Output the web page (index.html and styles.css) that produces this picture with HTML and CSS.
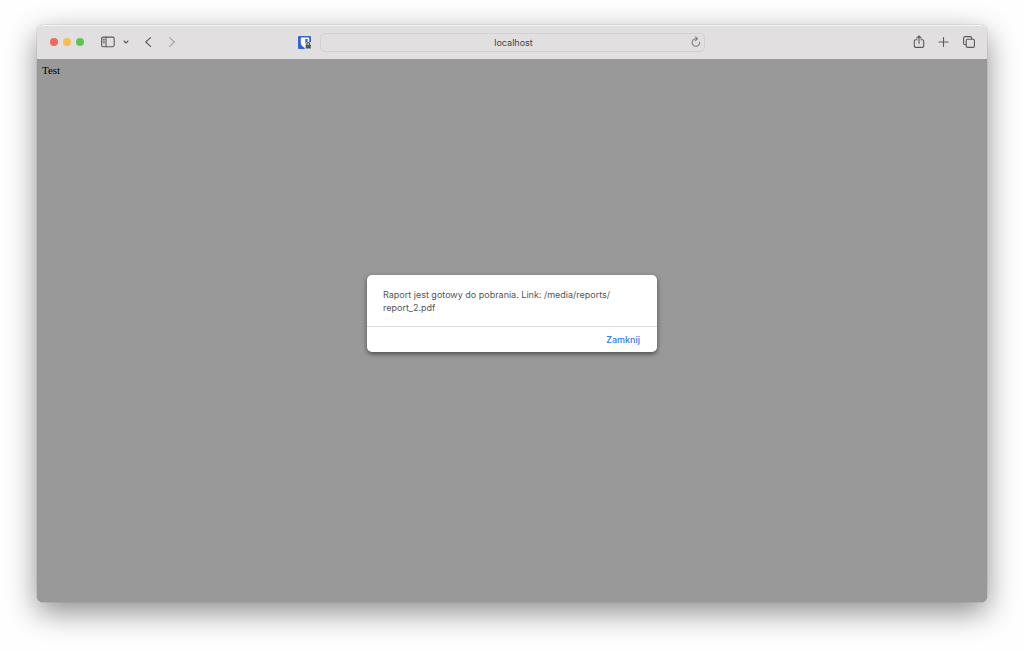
FILE: index.html
```html
<!DOCTYPE html>
<html lang="pl">
<head>
  <meta charset="UTF-8" />
  <title>localhost</title>
  <link rel="stylesheet" href="styles.css">
</head>
<body>

  <div class="window">
    <header class="toolbar">
      <div class="toolbar-left">
        <div class="lights">
          <span class="light red"></span>
          <span class="light yellow"></span>
          <span class="light green"></span>
        </div>
        <button class="icon-btn sidebar-btn" aria-label="Sidebar">
          <svg width="14" height="12" viewBox="0 0 14 12">
            <rect x="0.6" y="1.1" width="12.6" height="9.6" rx="1.6" />
            <path d="M5 1v9.600M2.200 3.300h1.200M2.200 5h1.200M2.200 6.700h1.200" />
          </svg>
        </button>
        <button class="icon-btn tabs-btn" aria-label="Tab groups">
          <svg width="6" height="6" viewBox="0 0 6 6"><path d="M1 2l2 2 2-2" /></svg>
        </button>
        <button class="icon-btn back-btn" aria-label="Back">
          <svg width="8" height="10" viewBox="0 0 8 10"><path d="M5.600.6L.8 5l4.800 4.400" /></svg>
        </button>
        <button class="icon-btn forward-btn" aria-label="Forward">
          <svg width="8" height="10" viewBox="0 0 8 10"><path d="M1.600.6L6.400 5 1.600 9.400" /></svg>
        </button>
        <button class="icon-btn shield-btn" aria-label="Password manager">
          <svg width="13" height="13" viewBox="0 0 13 13">
            <rect class="shield-bg" width="13" height="13" rx="1" />
            <path class="shield-half" d="M2.800 1.500h8.400v5.500c0 2.300-2.200 3.900-4.200 4.900-2-1-4.200-2.600-4.200-4.900z" />
            <path class="shield-bg" d="M7.300 3h2.300v3.200L7.300 8z" />
            <path class="lock-back" d="M6.800 13V8.400L8.500 6H13v7z" />
            <rect class="lock" x="7.800" y="8.800" width="5" height="3.700" rx=".5" />
            <path class="lock-bow" d="M8.900 9V8a1.400 1.400 0 0 1 2.800 0v1" />
          </svg>
        </button>
      </div>

      <div class="address">
        <input type="text" value="localhost" aria-label="Address">
        <button class="icon-btn reload-btn" aria-label="Reload">
          <svg width="10" height="12" viewBox="0 0 10 12"><path d="M8.700 6.300A3.800 3.800 0 1 1 5 2.700h1.200M4.500.8l2 1.900-2 2" /></svg>
        </button>
      </div>

      <div class="toolbar-right">
        <button class="icon-btn" aria-label="Share">
          <svg width="12" height="14" viewBox="0 0 12 14"><path d="M4 4.800H2.600a1.300 1.300 0 0 0-1.300 1.300v5a1.300 1.300 0 0 0 1.300 1.300h6.800a1.300 1.300 0 0 0 1.300-1.300v-5a1.300 1.300 0 0 0-1.300-1.300H8M6 8.500V1.200M3.800 3.200L6 1l2.200 2.200" /></svg>
        </button>
        <button class="icon-btn" aria-label="New tab">
          <svg width="12" height="12" viewBox="0 0 12 12"><path d="M5.500 1.500v9M1 6h9" /></svg>
        </button>
        <button class="icon-btn" aria-label="Tab overview">
          <svg width="12" height="12" viewBox="0 0 12 12">
            <rect x="3.200" y="3.200" width="8.200" height="8.200" rx="1.400" />
            <path d="M3 8.800h-.9A1.500 1.500 0 0 1 .6 7.300V2.100A1.500 1.500 0 0 1 2.100.6h5.200a1.500 1.500 0 0 1 1.500 1.500V3" />
          </svg>
        </button>
      </div>
    </header>

    <main class="page">Test</main>

    <div class="overlay">
      <div class="alert" role="alertdialog" aria-labelledby="message">
        <p class="message" id="message">Raport jest gotowy do pobrania. Link: /media/reports/<wbr>report_2.pdf</p>
        <div class="actions">
          <button class="close-btn">Zamknij</button>
        </div>
      </div>
    </div>
  </div>

</body>
</html>
```

FILE: styles.css
```css
* {
  box-sizing: border-box;
}

body {
  margin: 0;
  padding: 25px 37px 49px;
  min-height: 100vh;
  display: flex;
  background: #fefefe;
  font-family: Inter, "Liberation Sans", sans-serif;
}

button {
  border: none;
  padding: 0;
  background: none;
  font-family: inherit;
}

.window {
  position: relative;
  flex: 1;
  display: flex;
  flex-direction: column;
  border-radius: 6px;
  background: #999;
  box-shadow: 0 0 1px rgba(0, 0, 0, 0.6), 0 10px 30px rgba(0, 0, 0, 0.45);
}

.toolbar {
  display: grid;
  grid-template-columns: 1fr 385px 1fr;
  align-items: center;
  height: 34px;
  background: #e2dfe0;
  box-shadow: inset 0 1px #f4f2f3;
  border-radius: 6px 6px 0 0;
}

.toolbar-left,
.toolbar-right {
  display: flex;
  align-items: center;
}

.toolbar-left {
  padding: 0 9px 0 13px;
}

.toolbar-right {
  justify-content: flex-end;
  gap: 13px;
  padding-right: 12px;
}

.lights {
  display: flex;
  gap: 5px;
}

.light {
  width: 8px;
  height: 8px;
  border-radius: 50%;
}

.red { background: #ed6a5e; }
.yellow { background: #f5bf4f; }
.green { background: #61c554; }

.icon-btn {
  display: flex;
  color: #5c5a5b;
}

.icon-btn svg {
  fill: none;
  stroke: currentColor;
  stroke-width: 1.1;
  stroke-linecap: round;
  stroke-linejoin: round;
}

.sidebar-btn { margin-left: 17px; }
.tabs-btn { margin-left: 8px; }
.back-btn { margin-left: 16px; }

.forward-btn {
  margin-left: 15px;
  color: #a5a3a4;
}

.shield-btn { margin-left: auto; }

.icon-btn .shield-bg {
  fill: #3462d8;
  stroke: none;
}

.icon-btn .shield-half {
  fill: #fff;
  stroke: none;
}

.icon-btn .lock-back {
  fill: #e2dfe0;
  stroke: none;
}

.icon-btn .lock {
  fill: #555;
  stroke: none;
}

.icon-btn .lock-bow {
  stroke: #555;
}

.address {
  display: flex;
  align-items: center;
  height: 19px;
  padding: 0 3px 0 16px;
  border: 1px solid #d3d0d1;
  border-radius: 5px;
}

.address input {
  flex: 1;
  min-width: 0;
  padding: 0;
  border: none;
  outline: none;
  background: none;
  color: #444;
  font-family: inherit;
  font-size: 9px;
  text-align: center;
}

.reload-btn {
  color: #807e7f;
}

.page {
  flex: 1;
  padding: 5px;
  color: #000;
  font-family: "Liberation Serif", serif;
  font-size: 11px;
  line-height: 13px;
}

/* alert sits over the dimmed page */
.overlay {
  position: absolute;
  inset: 0;
  display: flex;
  align-items: center;
  justify-content: center;
}

.alert {
  width: 290px;
  background: #fff;
  border-radius: 5px;
  box-shadow: 0 2px 5px rgba(0, 0, 0, 0.5);
}

.message {
  margin: 0;
  padding: 13px 16px 12px;
  color: #555;
  font-size: 9px;
  line-height: 13px;
}

.actions {
  display: flex;
  justify-content: flex-end;
  padding: 6px 17px;
  border-top: 1px solid #dcdcdc;
}

.close-btn {
  color: #2b7bf6;
  font-size: 9px;
  font-weight: 500;
  line-height: 13px;
}
```
